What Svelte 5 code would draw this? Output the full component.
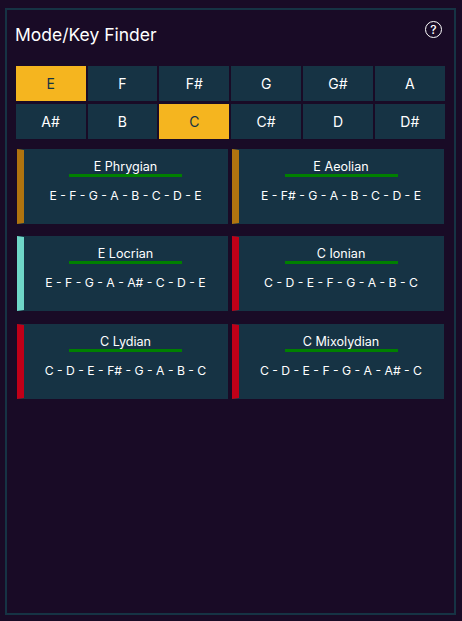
<script>
  const keys = ["E", "F", "F#", "G", "G#", "A", "A#", "B", "C", "C#", "D", "D#"];
  const selected = ["E", "C"];

  const modes = [
    { name: "E Phrygian", notes: "E - F - G - A - B - C - D - E", color: "#b0740f" },
    { name: "E Aeolian", notes: "E - F# - G - A - B - C - D - E", color: "#b0740f" },
    { name: "E Locrian", notes: "E - F - G - A - A# - C - D - E", color: "#6fd6c8" },
    { name: "C Ionian", notes: "C - D - E - F - G - A - B - C", color: "#c00018" },
    { name: "C Lydian", notes: "C - D - E - F# - G - A - B - C", color: "#c00018" },
    { name: "C Mixolydian", notes: "C - D - E - F - G - A - A# - C", color: "#c00018" },
  ];
</script>

<div class="frame">
  <header>
    <h1>Mode/Key Finder</h1>
    <button class="help" aria-label="Help">?</button>
  </header>

  <div class="keys">
    {#each keys as key}
      <button class="key" class:active={selected.includes(key)}>{key}</button>
    {/each}
  </div>

  <div class="modes">
    {#each modes as mode}
      <div class="mode" style="border-left-color: {mode.color}">
        <div class="name">{mode.name}</div>
        <div class="line"></div>
        <div class="notes">{mode.notes}</div>
      </div>
    {/each}
  </div>
</div>

<style>
  :global(body) {
    background: #190b26;
    font-family: Inter, "Liberation Sans", sans-serif;
  }

  .frame {
    box-sizing: border-box;
    width: 451px;
    height: 607px;
    margin: 8px 0 0 5px;
    padding: 0 9px;
    border: 2px solid #163344;
    color: #fff;
  }

  header {
    display: flex;
    justify-content: space-between;
    height: 56px;
  }

  h1 {
    margin: 14px 0 0 -1px;
    font-size: 17.5px;
    font-weight: 400;
    line-height: 22px;
  }

  .help {
    box-sizing: border-box;
    width: 17px;
    height: 17px;
    margin: 11px 3px 0 0;
    padding: 0;
    background: none;
    border: 1px solid #fff;
    border-radius: 50%;
    color: #fff;
    font: 500 12px/15px Inter, sans-serif;
  }

  .keys {
    display: grid;
    grid-template-columns: repeat(6, 1fr);
    gap: 3px 2px;
    width: 429px;
    margin-left: -0.3px;
  }

  .key {
    height: 35px;
    padding: 0;
    background: #163344;
    border: none;
    color: #fff;
    font: 400 14px Inter, sans-serif;
  }

  .key.active {
    background: #f5b51f;
    color: #163344;
  }

  .modes {
    display: grid;
    grid-template-columns: 211px 212px;
    gap: 12.5px 4px;
    margin: 9.75px 0 0 1px;
  }

  .mode {
    box-sizing: border-box;
    height: 75px;
    padding-top: 10px;
    background: #163344;
    border: 1px solid #163344;
    border-left-width: 7px;
    text-align: center;
  }

  .name {
    font-size: 12.6px;
    line-height: 14px;
  }

  .line {
    width: 113px;
    height: 3px;
    margin: 0 auto;
    background: #008000;
  }

  .notes {
    margin-top: 11px;
    font-size: 12.2px;
    line-height: 16px;
  }
</style>
